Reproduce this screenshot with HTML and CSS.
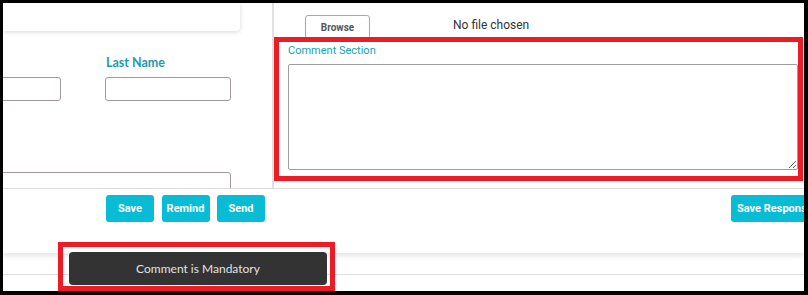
FILE: index.html
```html
<!DOCTYPE html>
<html lang="en">
<head>
<meta charset="utf-8">
<title>Response form</title>
<link rel="stylesheet" href="styles.css">
</head>
<body>
<div class="frame">
  <div class="main">
    <div class="left">
      <div class="top-card"></div>
      <div class="fields">
        <span class="field-label"></span>
        <label class="field-label">Last Name</label>
        <input class="field-input" type="text">
        <input class="field-input" type="text">
        <input class="field-input wide" type="text">
      </div>
    </div>
    <div class="divider"></div>
    <div class="right">
      <div class="file-row">
        <button class="browse" type="button">Browse</button>
        <span class="file-name">No file chosen</span>
      </div>
      <div class="comment-box">
        <div class="comment-label">Comment Section</div>
        <textarea class="comment-input"></textarea>
      </div>
    </div>
  </div>
  <div class="actions">
    <div class="action-group">
      <button class="btn" type="button">Save</button>
      <button class="btn" type="button">Remind</button>
      <button class="btn" type="button">Send</button>
    </div>
    <button class="btn btn-wide" type="button">Save Response</button>
  </div>
  <div class="footer-line"></div>
  <div class="toast-mark">
    <div class="toast">Comment is Mandatory</div>
  </div>
</div>
</body>
</html>
```
FILE: styles.css
```css
* { box-sizing: border-box; }

html, body {
  margin: 0;
  padding: 0;
  background: #000;
}

body {
  width: 808px;
  height: 295px;
  overflow: hidden;
  padding: 3px 4px 0 3px;
}

.frame {
  position: relative;
  width: 801px;
  height: 288px;
  background: #fff;
  overflow: hidden;
  font-family: Roboto, "Liberation Sans", Arial, sans-serif;
}

.main {
  display: flex;
  height: 186px;
  border-bottom: 1px solid #dedede;
}

.left {
  width: 269px;
  overflow: hidden;
}

.top-card {
  width: 237px;
  height: 28px;
  background: #fff;
  border-radius: 0 0 4px 0;
  box-shadow: 0 1px 5px rgba(0, 0, 0, 0.16);
}

.fields {
  display: grid;
  grid-template-columns: 126px 126px;
  column-gap: 44px;
  margin: 24px 0 0 -68px;
}

.field-label {
  font-family: Lato, "Open Sans", sans-serif;
  font-weight: 700;
  font-size: 12.5px;
  line-height: 16px;
  color: #1a9bad;
  padding-left: 1px;
  margin-bottom: 6px;
}

.field-input {
  height: 24px;
  border: 1px solid #a29a9a;
  border-radius: 3px;
  background: #fff;
  margin: 0;
}

.field-input.wide {
  grid-column: 1 / -1;
  margin-top: 71px;
}

.divider {
  width: 2px;
  background: #e0e0e0;
}

.right {
  flex: 1;
}

.file-row {
  display: flex;
  align-items: flex-start;
  height: 34px;
  padding: 12px 0 0 31px;
}

.browse {
  width: 65px;
  height: 24px;
  margin: 0;
  border: 1px solid #a8a8a8;
  border-radius: 3px;
  background: #fff;
  font-family: Roboto, "Liberation Sans", sans-serif;
  font-weight: 700;
  font-size: 10px;
  color: #555;
  padding: 0;
}

.file-name {
  margin: 3px 0 0 83px;
  font-size: 12px;
  line-height: 14px;
  color: #333;
}

.comment-box {
  position: relative;
  width: 529px;
  height: 144px;
  border: 5px solid #ed1c24;
  background: #fff;
  padding: 2px 0 0 9px;
}

.comment-label {
  font-size: 11px;
  line-height: 13px;
  color: #1a9fb5;
}

.comment-input {
  display: block;
  width: 510px;
  height: 106px;
  margin-top: 7px;
  border: 1px solid #9e9e9e;
  border-radius: 2px;
  background: #fff;
}

.actions {
  display: flex;
  align-items: flex-start;
  height: 64px;
  padding: 6px 0 0 103px;
  background: #fff;
  box-shadow: 0 3px 5px rgba(0, 0, 0, 0.1);
}

.action-group {
  display: flex;
  gap: 7.5px;
}

.btn {
  flex-shrink: 0;
  width: 48px;
  height: 27px;
  margin: 0;
  padding: 0;
  border: none;
  border-radius: 3px;
  background: #07bcd4;
  color: #fff;
  font-family: Roboto, "Liberation Sans", sans-serif;
  font-weight: 700;
  font-size: 11px;
}

.btn-wide {
  width: 93px;
  margin: 0 -20px 0 auto;
  text-align: left;
  padding-left: 6px;
  white-space: nowrap;
}

.footer-line {
  margin-top: 21px;
  border-top: 1px solid #dedede;
}

.toast-mark {
  position: absolute;
  left: 55px;
  top: 239px;
  width: 277px;
  height: 49px;
  border: 5px solid #ed1c24;
  padding: 5px 3px 1px 6px;
}

.toast {
  height: 33px;
  border-radius: 4px;
  background: #333;
  color: #e2e2e2;
  font-family: Lato, "Open Sans", sans-serif;
  font-size: 12px;
  line-height: 33px;
  text-align: center;
}
```
